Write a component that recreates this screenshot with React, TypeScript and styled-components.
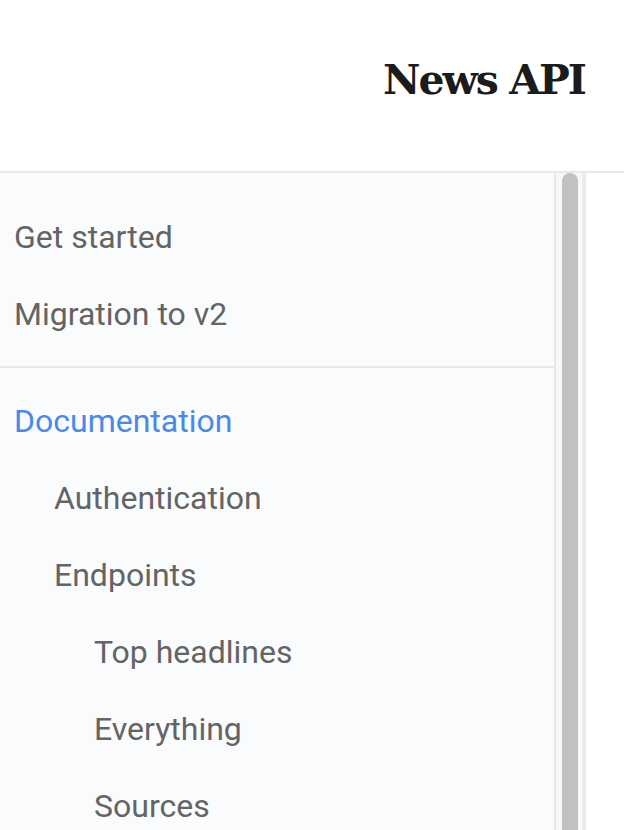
import React from "react";
import styled, { createGlobalStyle } from "styled-components";

const Global = createGlobalStyle`
  html, body { margin: 0; padding: 0; background: #ffffff; }
  body { font-family: Roboto, "Noto Sans", Arial, sans-serif; overflow: hidden; }
  * { box-sizing: border-box; }
`;

const Page = styled.div`
  width: 624px;
  height: 830px;
  display: flex;
  flex-direction: column;
  overflow: hidden;
`;

const Header = styled.header`
  height: 173px;
  flex: none;
  border-bottom: 2px solid #e8e8e8;
  display: flex;
  align-items: flex-start;
  justify-content: flex-end;
  padding: 56px 39px 0 0;
`;

const Brand = styled.div`
  font-family: "DejaVu Serif", "Liberation Serif", serif;
  font-weight: 700;
  font-size: 41px;
  line-height: 48px;
  letter-spacing: -2px;
  color: #1b1b1b;
`;

const Body = styled.div`
  flex: 1;
  display: flex;
  min-height: 0;
`;

const Sidebar = styled.nav`
  width: 556px;
  flex: none;
  background: #f9fbfd;
  border-right: 2px solid #e8e8e8;
  padding-top: 25px;
`;

const Group = styled.div<{ $divider?: boolean }>`
  padding-bottom: ${(p) => (p.$divider ? "14px" : "0")};
  margin-bottom: ${(p) => (p.$divider ? "14px" : "0")};
  border-bottom: ${(p) => (p.$divider ? "2px solid #e8e8e8" : "none")};
`;

const Item = styled.a<{ $level: number; $active?: boolean }>`
  display: flex;
  align-items: center;
  height: 77px;
  padding-left: ${(p) => 14 + p.$level * 40}px;
  font-size: 32px;
  color: ${(p) => (p.$active ? "#4b89e8" : "#646464")};
  text-decoration: none;
`;

const Track = styled.div`
  width: 30px;
  flex: none;
  background: #f8f8f8;
  border-right: 4px solid #ebebeb;
  padding: 0 4px 0 6px;
`;

const Thumb = styled.div`
  width: 16px;
  height: 100%;
  background: #c1c1c1;
  border-radius: 8px 8px 0 0;
`;

const Main = styled.main`
  flex: 1;
  background: #ffffff;
`;

export default function App() {
  return (
    <Page>
      <Global />
      <Header>
        <Brand>News API</Brand>
      </Header>
      <Body>
        <Sidebar>
          <Group $divider>
            <Item $level={0}>Get started</Item>
            <Item $level={0}>Migration to v2</Item>
          </Group>
          <Group>
            <Item $level={0} $active>Documentation</Item>
            <Item $level={1}>Authentication</Item>
            <Item $level={1}>Endpoints</Item>
            <Item $level={2}>Top headlines</Item>
            <Item $level={2}>Everything</Item>
            <Item $level={2}>Sources</Item>
          </Group>
        </Sidebar>
        <Track>
          <Thumb />
        </Track>
        <Main />
      </Body>
    </Page>
  );
}
